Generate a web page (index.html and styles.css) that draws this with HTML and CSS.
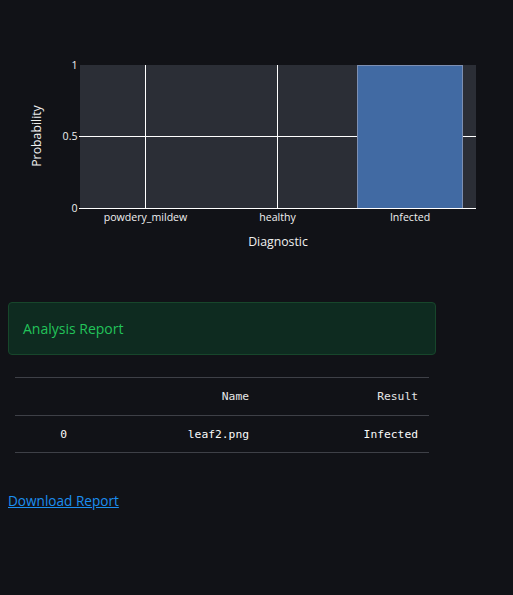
FILE: index.html
```html
<!DOCTYPE html>
<html>
<head>
<meta charset="utf-8">
<link rel="stylesheet" href="styles.css">
</head>
<body>
<main class="page">
  <svg class="chart" width="513" height="260" viewBox="0 0 513 260" xmlns="http://www.w3.org/2000/svg">
    <rect x="80" y="65" width="396" height="144" fill="#2b2e36"/>
    <line x1="145.5" y1="65" x2="145.5" y2="209" stroke="#ffffff" stroke-width="1"/>
    <line x1="277.5" y1="65" x2="277.5" y2="209" stroke="#ffffff" stroke-width="1"/>
    <line x1="79" y1="136.5" x2="476" y2="136.5" stroke="#ffffff" stroke-width="1"/>
    <rect x="357.5" y="65.5" width="105" height="143" fill="#416aa3" stroke="#7d8fb2" stroke-width="1"/>
    <line x1="79" y1="208.5" x2="476" y2="208.5" stroke="#ffffff" stroke-width="1"/>
    <g class="tick" text-anchor="end">
      <text x="77.5" y="69">1</text>
      <text x="77.5" y="140">0.5</text>
      <text x="77.5" y="212">0</text>
    </g>
    <g class="tick" text-anchor="middle">
      <text x="145.5" y="221">powdery_mildew</text>
      <text x="277.5" y="221">healthy</text>
      <text x="410" y="221">Infected</text>
    </g>
    <text class="axis" x="278" y="246" text-anchor="middle">Diagnostic</text>
    <text class="axis" x="0" y="0" text-anchor="middle" transform="translate(41 136) rotate(-90)">Probability</text>
  </svg>

  <div class="alert">Analysis Report</div>

  <table class="report">
    <thead>
      <tr><th class="idx"></th><th class="name">Name</th><th class="res">Result</th></tr>
    </thead>
    <tbody>
      <tr><td class="idx">0</td><td class="name">leaf2.png</td><td class="res">Infected</td></tr>
    </tbody>
  </table>

  <a class="download" href="#">Download Report</a>
</main>
</body>
</html>
```

FILE: styles.css
```css
html, body {
  margin: 0;
  padding: 0;
  background: #111217;
}

.page {
  display: flex;
  flex-direction: column;
  align-items: flex-start;
  width: 513px;
  height: 595px;
  font-family: "Open Sans", "Noto Sans", sans-serif;
  color: #fafafa;
}

.chart {
  display: block;
}

.tick {
  font-family: "Open Sans", sans-serif;
  font-size: 10.6px;
  font-weight: 500;
  fill: #f0f0f0;
}

.axis {
  font-family: "Open Sans", sans-serif;
  font-size: 12.3px;
  font-weight: 500;
  fill: #f0f0f0;
}

.alert {
  box-sizing: border-box;
  margin: 42px 0 0 8px;
  width: 428px;
  height: 53px;
  padding: 0 14px;
  display: flex;
  align-items: center;
  background: #0e2b20;
  border: 1px solid #17462b;
  border-radius: 4px;
  color: #22c35a;
  font-size: 14px;
  font-weight: 500;
}

.report {
  margin: 22px 0 0 15px;
  width: 414px;
  border-collapse: collapse;
  font-family: "DejaVu Sans Mono", monospace;
  font-size: 11.3px;
  color: #fafafa;
}

.report th,
.report td {
  text-align: right;
  padding: 0 11px 0 0;
  border-top: 1px solid #3e4047;
  border-bottom: 1px solid #3e4047;
  font-weight: normal;
}

.report th {
  height: 37px;
  color: #e6e6e6;
}

.report td {
  height: 36px;
}

.report .idx {
  width: 52px;
}

.report .name {
  width: 171px;
}

.download {
  margin: 38px 0 0 8px;
  color: #1c8ff0;
  text-decoration: underline;
  font-size: 13.6px;
}
```
